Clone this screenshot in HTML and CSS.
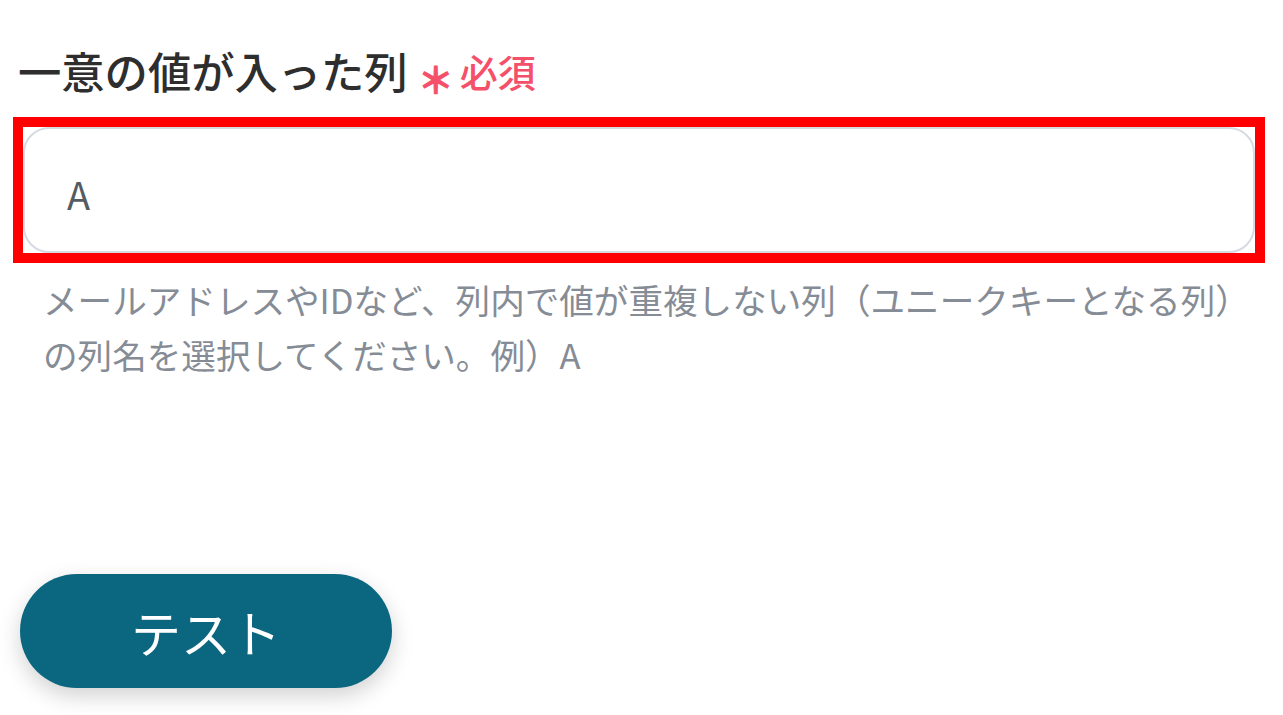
FILE: index.html
```html
<!DOCTYPE html>
<html lang="ja">
<head>
<meta charset="utf-8">
<title>一意の値が入った列</title>
<link rel="stylesheet" href="styles.css">
</head>
<body>
<div class="page">
  <div class="label">
    <span class="label-text">一意の値が入った列</span>
    <span class="req-mark">＊</span>
    <span class="req-text">必須</span>
  </div>
  <div class="highlight">
    <div class="input">A</div>
  </div>
  <p class="help">メールアドレスやIDなど、列内で値が重複しない列（ユニークキーとなる列）<br>の列名を選択してください。例）A</p>
  <button class="btn">テスト</button>
</div>
</body>
</html>
```
FILE: styles.css
```css
html, body {
  margin: 0;
  padding: 0;
  background: #ffffff;
}
.page {
  padding: 38px 0 40px 13px;
  font-family: "Noto Sans CJK JP", "Noto Sans", sans-serif;
}
.label {
  display: flex;
  align-items: center;
  height: 64px;
  margin-left: 5px;
}
.label-text {
  font-size: 43.3px;
  font-weight: 500;
  color: #2e2e2e;
}
.req-mark {
  color: #f5506a;
  font-size: 36px;
  font-weight: 700;
  margin-left: 10px;
  position: relative;
  top: 8px;
  line-height: 1;
  -webkit-text-stroke: 1px #f5506a;
}
.req-text {
  color: #f5506a;
  font-size: 38px;
  font-weight: 500;
  margin-left: 6px;
}
.highlight {
  margin-top: 15px;
  width: 1232px;
  height: 126px;
  border: 10px solid #ff0000;
}
.input {
  box-sizing: border-box;
  height: 100%;
  border: 2px solid #d6dbe2;
  border-radius: 26px;
  padding-left: 42px;
  padding-top: 6px;
  display: flex;
  align-items: center;
  font-size: 38px;
  color: #555b63;
}
.help {
  margin: 9px 0 0 30px;
  font-size: 34.6px;
  line-height: 55px;
  color: #868c95;
}
.btn {
  display: block;
  margin-top: 192px;
  margin-left: 7px;
  width: 372px;
  height: 114px;
  border: none;
  border-radius: 57px;
  background: #0b667f;
  color: #ffffff;
  font-family: "Noto Sans CJK JP", "Noto Sans", sans-serif;
  font-size: 50px;
  font-weight: 400;
  box-shadow: 0 8px 22px rgba(0, 0, 0, 0.18);
}
```
